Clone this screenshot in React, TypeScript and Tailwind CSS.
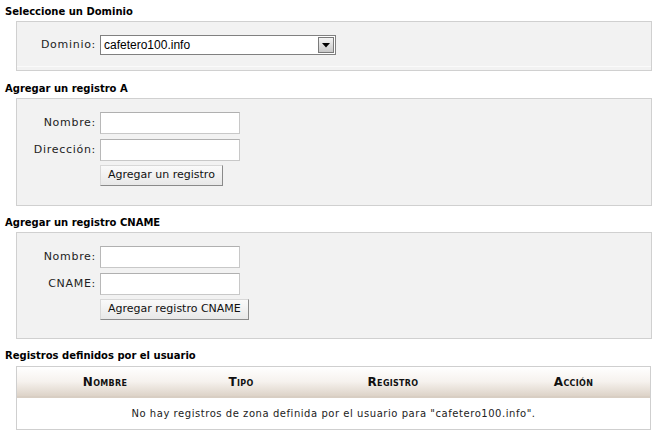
import React from "react";

const labelCls = "text-right text-[11px] tracking-[0.7px] text-[#222] pr-[4px]";
const inputCls =
  "h-[22px] w-[140px] bg-white border border-[#c8c8c8] border-t-[#b0b0b0] border-l-[#b8b8b8]";

function Heading({ children }: { children: React.ReactNode }) {
  return (
    <div className="h-[14px] leading-[14px] pl-[5px] text-[10px] font-bold text-black [font-family:'DejaVu_Sans',sans-serif]">
      {children}
    </div>
  );
}

function Button({ children }: { children: React.ReactNode }) {
  return (
    <div className="flex h-[21px] items-center px-[7px] text-[11px] text-[#111] bg-gradient-to-b from-[#fafafa] to-[#e8e8e8] border border-[#d8d8d8] border-r-[#8a8a8a] border-b-[#8a8a8a]">
      {children}
    </div>
  );
}

export default function App() {
  return (
    <div className="w-[658px] h-[431px] bg-white pt-[5px] [font-family:'DejaVu_Sans',sans-serif] overflow-hidden">
      <Heading>Seleccione un Dominio</Heading>
      <div className="ml-[16px] mr-[6px] mt-[2px] h-[50px] bg-[#f2f2f2] border border-[#d0d0d0] pt-[13px]">
        <div className="grid grid-cols-[83px_auto] items-center">
          <div className={labelCls}>Dominio:</div>
          <div className="flex h-[20px] w-[236px] items-center bg-white border border-[#808080]">
            <span className="flex-1 pl-[3px] text-[12px] text-black [font-family:'Liberation_Sans',sans-serif]">
              cafetero100.info
            </span>
            <div className="flex h-[16px] w-[16px] mr-[1px] items-center justify-center bg-gradient-to-b from-[#f4f4f4] to-[#c8c8c8] border border-[#7a7a7a]">
              <svg width="8" height="5" viewBox="0 0 8 5">
                <path d="M0 0h8L4 4.5z" fill="#000" />
              </svg>
            </div>
          </div>
        </div>
        <div className="mt-[11px] border-b border-[#fafafa]" />
      </div>

      <div className="mt-[11px]">
        <Heading>Agregar un registro A</Heading>
      </div>
      <div className="ml-[16px] mr-[6px] mt-[2px] h-[108px] bg-[#f2f2f2] border border-[#d0d0d0] pt-[13px]">
        <div className="grid grid-cols-[83px_auto] items-center gap-y-[5px]">
          <div className={labelCls}>Nombre:</div>
          <div className={inputCls} />
          <div className={labelCls}>Dirección:</div>
          <div className={inputCls} />
          <div />
          <div className="flex -mt-[1px]">
            <Button>Agregar un registro</Button>
          </div>
        </div>
      </div>

      <div className="mt-[10px]">
        <Heading>Agregar un registro CNAME</Heading>
      </div>
      <div className="ml-[16px] mr-[6px] mt-[2px] h-[107px] bg-[#f2f2f2] border border-[#d0d0d0] pt-[13px]">
        <div className="grid grid-cols-[83px_auto] items-center gap-y-[5px]">
          <div className={labelCls}>Nombre:</div>
          <div className={inputCls} />
          <div className={labelCls}>CNAME:</div>
          <div className={inputCls} />
          <div />
          <div className="flex -mt-[1px]">
            <Button>Agregar registro CNAME</Button>
          </div>
        </div>
      </div>

      <div className="mt-[10px]">
        <Heading>Registros definidos por el usuario</Heading>
      </div>
      <div className="ml-[16px] mr-[7px] mt-[3px] h-[64px] border border-[#cfcfcf] bg-white">
        <div className="grid h-[31px] grid-cols-[176px_96px_208px_1fr] items-center bg-gradient-to-b from-white via-[#f6f2ee] to-[#ddd3c8] border-b-2 border-[#d8cec3] text-[12px] tracking-[0.3px] font-bold text-[#111] [font-variant:small-caps] [font-family:'DejaVu_Sans',sans-serif]">
          <div className="text-center">Nombre</div>
          <div className="text-center">Tipo</div>
          <div className="text-center">Registro</div>
          <div className="text-center">Acción</div>
        </div>
        <div className="flex h-[30px] items-center justify-center text-[10px] tracking-[0.55px] text-[#222]">
          No hay registros de zona definida por el usuario para "cafetero100.info".
        </div>
      </div>
    </div>
  );
}
